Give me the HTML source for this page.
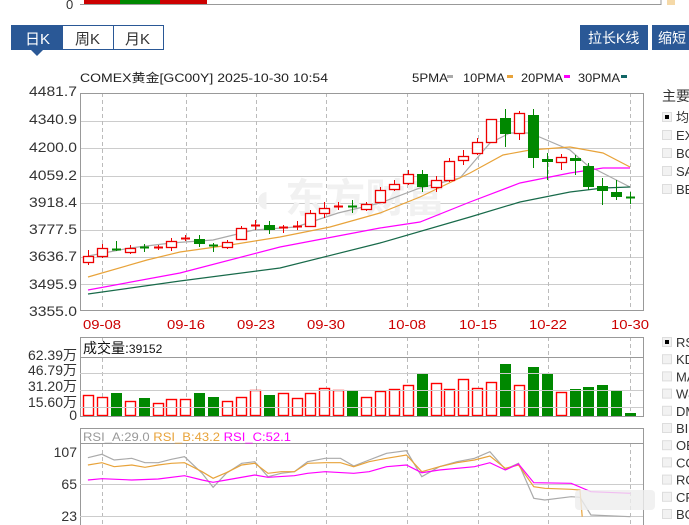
<!DOCTYPE html>
<html><head><meta charset="utf-8"><style>
body{margin:0;width:689px;height:525px;overflow:hidden;background:#fff;font-family:"Liberation Sans","Noto Sans CJK SC",sans-serif}
svg{position:absolute;left:0;top:0}
</style></head><body>
<svg id="s" width="689" height="525" xmlns="http://www.w3.org/2000/svg" font-family="Liberation Sans, Noto Sans CJK SC, sans-serif">
<text x="66" y="9" font-size="13" fill="#333">0</text>
<rect x="84" y="0" width="123" height="4" fill="#c00"/>
<rect x="120" y="0" width="40" height="4" fill="#080"/>
<line x1="80" y1="4.5" x2="661" y2="4.5" stroke="#999"/>
<line x1="661" y1="0" x2="661" y2="5" stroke="#999"/>
<rect x="667" y="0" width="8" height="5" fill="#f5d9a8"/>
<rect x="11.5" y="25.5" width="152" height="24" fill="#fff" stroke="#2a5896"/>
<rect x="11" y="25" width="52" height="25" fill="#2a5896"/>
<polygon points="31,50 43,50 37,56" fill="#2a5896"/>
<line x1="113.5" y1="25" x2="113.5" y2="50" stroke="#2a5896"/>
<text x="25" y="44" font-size="15" fill="#fff">日K</text>
<text x="75" y="44" font-size="15" fill="#333">周K</text>
<text x="125" y="44" font-size="15" fill="#333">月K</text>
<rect x="580" y="25" width="68" height="25" fill="#2a5896"/>
<text x="588" y="43" font-size="14" fill="#fff">拉长K线</text>
<rect x="652" y="25" width="40" height="25" fill="#2a5896"/>
<text x="658" y="43" font-size="14" fill="#fff">缩短</text>
<text x="80" y="82" font-size="12" fill="#222" textLength="248" lengthAdjust="spacingAndGlyphs">COMEX黄金[GC00Y] 2025-10-30 10:54</text>
<text x="412" y="82" font-size="12" fill="#222" textLength="36" lengthAdjust="spacingAndGlyphs">5PMA</text><rect x="447" y="75" width="6" height="3" fill="#aaa"/>
<text x="463" y="82" font-size="12" fill="#222" textLength="42" lengthAdjust="spacingAndGlyphs">10PMA</text><rect x="507" y="75" width="6" height="3" fill="#e8a33a"/>
<text x="521" y="82" font-size="12" fill="#222" textLength="42" lengthAdjust="spacingAndGlyphs">20PMA</text><rect x="564" y="75" width="6" height="3" fill="#f0f"/>
<text x="578" y="82" font-size="12" fill="#222" textLength="42" lengthAdjust="spacingAndGlyphs">30PMA</text><rect x="621" y="75" width="6" height="3" fill="#166"/>
<g id="g"></g>
<text x="662" y="101" font-size="14" fill="#333">主要</text>
</svg>
<script>
const g=document.getElementById('g');let h='';
const L=(a,b,c,d,col,ex='')=>h+=`<line x1="${a}" y1="${b}" x2="${c}" y2="${d}" stroke="${col}" ${ex}/>`;
[121,148,176,203,230,257,284].forEach(y=>L(80,y+.5,643,y+.5,'#ccc'));
const vx=[102,186,256,326,407,478,548,630];
vx.forEach(x=>{L(x+.5,93,x+.5,310,'#bbb','stroke-dasharray="4,3"');L(x+.5,337,x+.5,416,'#bbb','stroke-dasharray="4,3"');L(x+.5,443,x+.5,525,'#bbb','stroke-dasharray="4,3"')});
h+=`<rect x="80.5" y="93.5" width="563" height="217" fill="none" stroke="#999"/>`;
const yl=[["4481.7",96],["4340.9",124],["4200.0",152],["4059.2",180],["3918.4",207],["3777.5",234],["3636.7",261],["3495.9",289],["3355.0",316]];
yl.forEach(([t,y])=>h+=`<text x="77" y="${y}" font-size="14" fill="#333" text-anchor="end" textLength="48" lengthAdjust="spacingAndGlyphs">${t}</text>`);
["09-08","09-16","09-23","09-30","10-08","10-15","10-22","10-30"].forEach((t,i)=>h+=`<text x="${vx[i]}" y="329" font-size="13" fill="#c00" text-anchor="middle" textLength="38" lengthAdjust="spacingAndGlyphs">${t}</text>`);
h+=`<text x="250" y="212" font-size="40" fill="#f1f1f1" font-weight="bold">◖ 东方财富</text>`;
const P=(pts,col)=>h+=`<polyline points="${pts}" fill="none" stroke="${col}" stroke-width="1.2"/>`;
P("88,256 130,248 171,243 213,240 254,230 296,227 338,213 380,203 420,188 460,178 490,143 510,133 530,133 570,150 587,165 630,187","#aaa");
P("88,277 147,260 180,252 230,245 280,237 330,227 380,213 420,197 470,173 503,155 530,150 570,147 603,153 630,167","#e8a33a");
P("88,290 180,273 280,247 380,228 420,222 470,202 520,183 570,173 603,168 630,168","#f0f");
P("88,294 180,281 280,268 380,243 470,217 520,202 570,192 603,188 630,187","#186a4a");
const C=[[256,262,1],[248,256,1],[249,251,0],[248,252,1],[247,249,0],[247,249,1],[241,247,1],[238,240,1],[239,244,0],[245,247,0],[242,247,1],[228,239,1],[225,227,1],[225,230,0],[227,229,1],[226,228,1],[213,226,1],[208,213,1],[206,208,1],[206,208,0],[204,209,1],[190,202,1],[184,189,1],[174,183,1],[174,187,0],[180,187,1],[161,180,1],[156,160,1],[142,153,1],[119,142,1],[118,134,0],[113,133,1],[115,158,0],[159,162,0],[157,162,1],[158,161,0],[166,187,0],[186,191,0],[192,197,0],[197,198,0]];
const W=[[250,265],[244,258],[241,251],[245,254],[244,252],[245,250],[238,251],[235,241],[235,247],[243,252],[240,249],[226,240],[220,230],[221,234],[225,233],[221,230],[210,227],[202,218],[202,210],[200,213],[202,211],[187,203],[180,191],[170,185],[170,192],[176,192],[158,182],[150,165],[138,155],[119,143],[109,147],[111,140],[109,168],[153,180],[154,170],[155,175],[163,190],[178,205],[180,200],[192,204]];
const vol=[395,397,393,401,398,403,399,399,393,397,401,397,390,395,393,398,393,388,390,390,397,391,389,385,374,383,389,379,388,382,364,385,367,373,392,389,387,385,390,413];
const vol0=[0,0,1,0,1,0,0,0,1,1,0,0,0,1,0,0,0,0,0,1,0,0,0,0,1,0,0,0,0,0,1,0,1,1,0,1,1,1,1,1];
C.forEach((c,i)=>{const x=Math.round(88+i*13.9);const col=c[2]?'#e00':'#080';
L(x+.5,W[i][0],x+.5,W[i][1],col);
if(c[1]-c[0]<=2)L(x-4,c[0]+.5,x+5,c[0]+.5,col,'stroke-width="2"');
else h+=c[2]?`<rect x="${x-4.5}" y="${c[0]+.5}" width="10" height="${c[1]-c[0]}" fill="#fff" stroke="${col}" stroke-width="1.3"/>`:`<rect x="${x-5}" y="${c[0]}" width="11" height="${c[1]-c[0]}" fill="${col}"/>`;
const t=vol[i];h+=vol0[i]?`<rect x="${x-5}" y="${t}" width="11" height="${416-t}" fill="#080"/>`:`<rect x="${x-4.5}" y="${t+.5}" width="10" height="${415-t}" fill="#fff" stroke="#f00" stroke-width="1.4"/>`;});
h+=`<rect x="80.5" y="337.5" width="563" height="79" fill="none" stroke="#999"/>`;
L(80,357.5,643,357.5,'#999');[373,390,407].forEach(y=>L(80,y+.5,643,y+.5,'#ccc'));
h+=`<text x="83" y="353" font-size="14" fill="#111">成交量:<tspan font-size="12">39152</tspan></text>`;
[["62.39万",360],["46.79万",375],["31.20万",391],["15.60万",407],["0",420]].forEach(([t,y])=>h+=`<text x="77" y="${y}" font-size="14" fill="#333" text-anchor="end">${t}</text>`);
h+=`<rect x="80.5" y="428.5" width="563" height="100" fill="none" stroke="#999"/>`;
L(80,443.5,643,443.5,'#999');[484,516].forEach(y=>L(80,y+.5,643,y+.5,'#ccc'));
h+=`<text x="83" y="441" font-size="12" textLength="208" lengthAdjust="spacingAndGlyphs"><tspan fill="#999">RSI_A:29.0 </tspan><tspan fill="#e8a33a">RSI_B:43.2 </tspan><tspan fill="#f0f">RSI_C:52.1</tspan></text>`;
[["107",457],["65",489],["23",521]].forEach(([t,y])=>h+=`<text x="77" y="${y}" font-size="14" fill="#333" text-anchor="end">${t}</text>`);
const R=(a,col)=>{let p=[];for(let i=0;i<a.length;i+=2)p.push((a[i]/2.276).toFixed(1)+','+(330+a[i+1]/3).toFixed(1));P(p.join(' '),col)};
R([200,383,232,373,260,390,300,385,330,398,360,398,390,388,420,380,460,430,485,472,515,430,550,400,580,395,610,440,640,430,670,425,700,395,740,385,775,385,805,408,840,390,880,370,925,362,960,440,1000,410,1040,395,1080,385,1115,365,1150,418,1180,400,1215,505,1240,510,1300,500,1320,502,1345,555,1435,560],'#aaa');
R([200,405,232,398,260,410,300,405,330,412,360,405,390,400,420,398,460,425,485,445,515,428,550,405,580,400,610,430,640,425,670,425,700,400,740,398,775,398,805,410,840,395,880,385,925,375,960,425,1000,410,1040,398,1080,390,1115,378,1150,415,1180,405,1215,470,1240,475,1300,478,1320,480,1325,560],'#e8a33a');
R([200,450,232,446,300,450,360,447,420,437,460,450,485,457,515,450,580,435,610,442,670,437,700,430,740,425,805,430,840,425,880,410,925,405,960,428,1000,420,1080,410,1115,398,1150,420,1180,402,1215,458,1300,460,1345,485,1435,490],'#f0f');
h+=`<rect x="575" y="490" width="80" height="20" rx="4" fill="#eee" opacity=".8"/>`;
const cb=(y,t,on)=>{h+=`<rect x="662.5" y="${y+.5}" width="9" height="9" fill="#f2f2f2" stroke="#ddd"/>`+(on?`<rect x="665" y="${y+3}" width="4" height="4" fill="#000"/>`:'')+`<text x="676" y="${y+10}" font-size="13" fill="#333">${t}</text>`};
[["均",1],["EX"],["BO"],["SA"],["BE"]].forEach((a,i)=>cb(112+i*18,a[0],a[1]));
[["RS",1],["KD"],["MA"],["W&"],["DM"],["BI"],["OB"],["CC"],["RO"],["CR"],["BO"]].forEach((a,i)=>cb(337+i*17.2,a[0],a[1]));
g.innerHTML=h;
</script>
</body></html>
